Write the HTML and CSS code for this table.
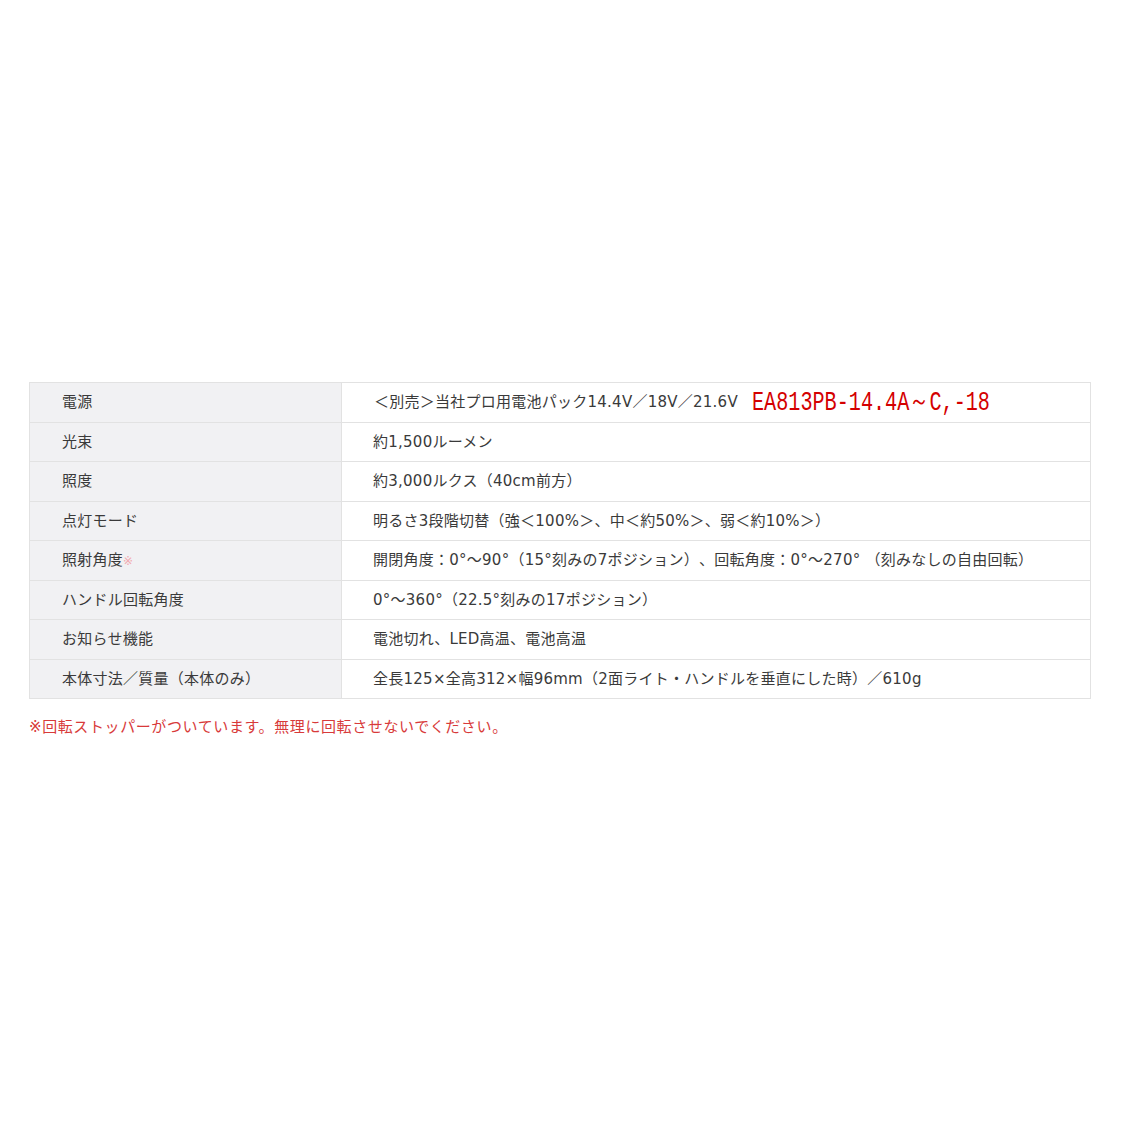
FILE: index.html
```html
<!DOCTYPE html>
<html lang="ja">
<head>
<meta charset="utf-8">
<title>仕様</title>
<link rel="stylesheet" href="styles.css">
</head>
<body>
<div class="page">
  <table class="spec">
    <tbody>
      <tr><th>電源</th><td><span class="lead">＜別売＞当社プロ用電池パック14.4V／18V／21.6V</span><span class="model">EA813PB-14.4A～C,-18</span></td></tr>
      <tr><th>光束</th><td>約1,500ルーメン</td></tr>
      <tr><th>照度</th><td>約3,000ルクス（40cm前方）</td></tr>
      <tr><th>点灯モード</th><td>明るさ3段階切替（強＜100%＞、中＜約50%＞、弱＜約10%＞）</td></tr>
      <tr><th>照射角度<span class="mark">※</span></th><td>開閉角度：0°～90°（15°刻みの7ポジション）、回転角度：0°～270° （刻みなしの自由回転）</td></tr>
      <tr><th>ハンドル回転角度</th><td>0°～360°（22.5°刻みの17ポジション）</td></tr>
      <tr><th>お知らせ機能</th><td>電池切れ、LED高温、電池高温</td></tr>
      <tr><th>本体寸法／質量（本体のみ）</th><td>全長125×全高312×幅96mm（2面ライト・ハンドルを垂直にした時）／610g</td></tr>
    </tbody>
  </table>
  <p class="note">※回転ストッパーがついています。無理に回転させないでください。</p>
</div>
</body>
</html>
```

FILE: styles.css
```css
html, body {
  margin: 0;
  padding: 0;
  background: #ffffff;
}
body {
  font-family: "DejaVu Sans", "Noto Sans CJK JP", sans-serif;
  color: #3a3a3a;
  text-spacing-trim: space-all;
}
.page {
  padding: 382px 31px 0 29px;
}
.spec {
  width: 1062px;
  border-collapse: collapse;
  border: 1px solid #e2e2e2;
  font-size: 15px;
  letter-spacing: 0.25px;
}
.spec th,
.spec td {
  height: 38.5px;
  padding: 0 0 0 31px;
  border: 1px solid #e2e2e2;
  text-align: left;
  font-weight: normal;
  vertical-align: middle;
  white-space: nowrap;
  line-height: 20px;
}
.spec th {
  width: 279px;
  background: #f1f1f3;
  padding-left: 32px;
}
.spec td {
  background: #ffffff;
}
.lead {
  margin-left: 1px;
}
.model {
  display: inline-block;
  margin-left: 14px;
  font-family: "Liberation Mono", monospace;
  font-size: 28px;
  letter-spacing: 0;
  color: #d40000;
  transform: scaleX(0.72);
  transform-origin: left center;
  vertical-align: -3px;
  line-height: 20px;
}
.mark {
  color: #f2aab0;
  font-size: 12px;
}
.note {
  margin: 16px 0 0 0;
  font-size: 15px;
  letter-spacing: 0.6px;
  color: #d83a3a;
}
```
